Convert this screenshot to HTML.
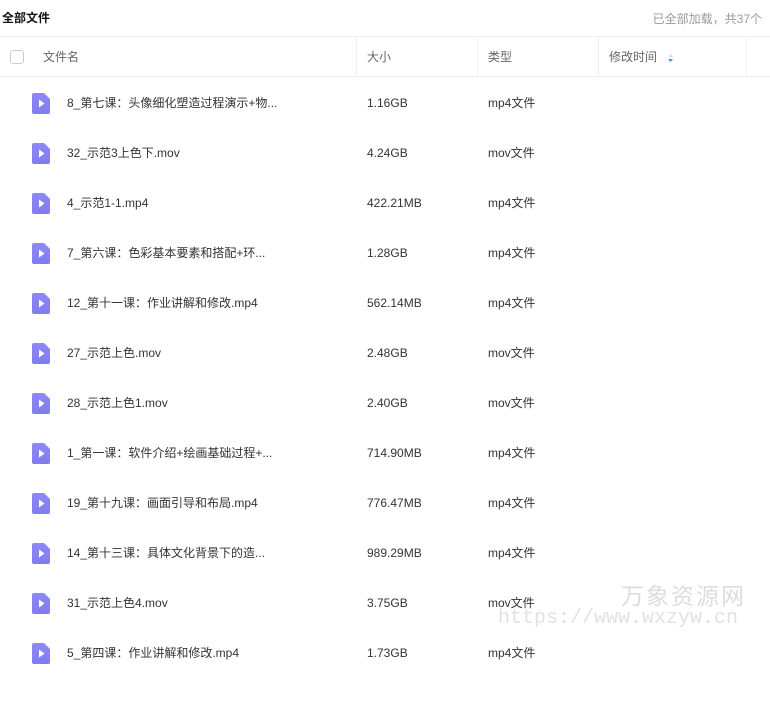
<!DOCTYPE html>
<html><head><meta charset="utf-8"><style>
*{margin:0;padding:0;box-sizing:border-box}
body{width:770px;height:653px;overflow:hidden;background:#fff;font-family:"Liberation Sans","Noto Sans CJK SC",sans-serif;color:#333;position:relative}
.title{position:absolute;left:2px;top:9px;font-size:12px;font-weight:bold;color:#111}
.count{position:absolute;right:8px;top:10px;font-size:12px;color:#999}
.hdr{position:absolute;left:0;top:36px;width:770px;height:41px;border-top:1px solid #f0f0f0;border-bottom:1px solid #eee}
.hdr span{position:absolute;top:12px;font-size:12px;line-height:16px;color:#666}
.vl{position:absolute;top:0;width:1px;height:40px;background:#f0f0f0}
.cb{position:absolute;left:10px;top:13px;width:14px;height:14px;border:1px solid #ccc;border-radius:3px}
.row{position:absolute;left:0;width:770px;height:50px;font-size:12px;color:#333}
.row .ic{position:absolute;left:32px;top:-10px;width:18px;height:21px}
.row span{position:absolute;top:-8px;line-height:16px;height:16px;white-space:nowrap}
.wm1{position:absolute;left:621px;top:579px;font-size:23px;line-height:30px;color:#ddd;letter-spacing:2px;font-family:"Noto Sans CJK SC",sans-serif;white-space:nowrap}
.wm2{position:absolute;left:498px;top:606px;font-size:20px;line-height:26px;color:#e2e2e2;font-family:"Liberation Mono",monospace;white-space:nowrap}
</style></head><body>
<div class="title">全部文件</div>
<div class="count">已全部加载，共37个</div>
<div class="hdr">
<div class="cb"></div>
<span style="left:43px">文件名</span>
<div class="vl" style="left:356px"></div><span style="left:367px">大小</span>
<div class="vl" style="left:477px"></div><span style="left:488px">类型</span>
<div class="vl" style="left:598px"></div><span style="left:609px">修改时间</span>
<svg style="position:absolute;left:667px;top:16px" width="7" height="10"><path d="M1 4L3.5 1L6 4Z" fill="#ddd"/><path d="M1 6L3.5 9L6 6Z" fill="#2a9be8"/></svg>
<div class="vl" style="left:746px"></div>
</div>
<div id="rows"></div>
<div class="wm1">万象资源网</div>
<div class="wm2">https://www.wxzyw.cn</div>
<script>
var d=[["8_第七课：头像细化塑造过程演示+物...","1.16GB","mp4文件"],["32_示范3上色下.mov","4.24GB","mov文件"],["4_示范1-1.mp4","422.21MB","mp4文件"],["7_第六课：色彩基本要素和搭配+环...","1.28GB","mp4文件"],["12_第十一课：作业讲解和修改.mp4","562.14MB","mp4文件"],["27_示范上色.mov","2.48GB","mov文件"],["28_示范上色1.mov","2.40GB","mov文件"],["1_第一课：软件介绍+绘画基础过程+...","714.90MB","mp4文件"],["19_第十九课：画面引导和布局.mp4","776.47MB","mp4文件"],["14_第十三课：具体文化背景下的造...","989.29MB","mp4文件"],["31_示范上色4.mov","3.75GB","mov文件"],["5_第四课：作业讲解和修改.mp4","1.73GB","mp4文件"]];
var h="";d.forEach(function(r,i){var y=103+i*50;h+='<div class="row" style="top:'+y+'px"><svg class="ic" viewBox="0 0 18 21"><defs><linearGradient id="g'+i+'" x1="0" y1="0" x2="0" y2="1"><stop offset="0" stop-color="#8f88f8"/><stop offset="1" stop-color="#7f7cf0"/></linearGradient></defs><path d="M2 0H12L18 6V19Q18 21 16 21H2Q0 21 0 19V2Q0 0 2 0Z" fill="url(#g'+i+')"/><path d="M7 6.5L12.5 10.5L7 14.5Z" fill="#fff"/></svg><span style="left:67px">'+r[0]+'</span><span style="left:367px">'+r[1]+'</span><span style="left:488px">'+r[2]+'</span></div>'});
document.getElementById("rows").innerHTML=h;
</script>
</body></html>
